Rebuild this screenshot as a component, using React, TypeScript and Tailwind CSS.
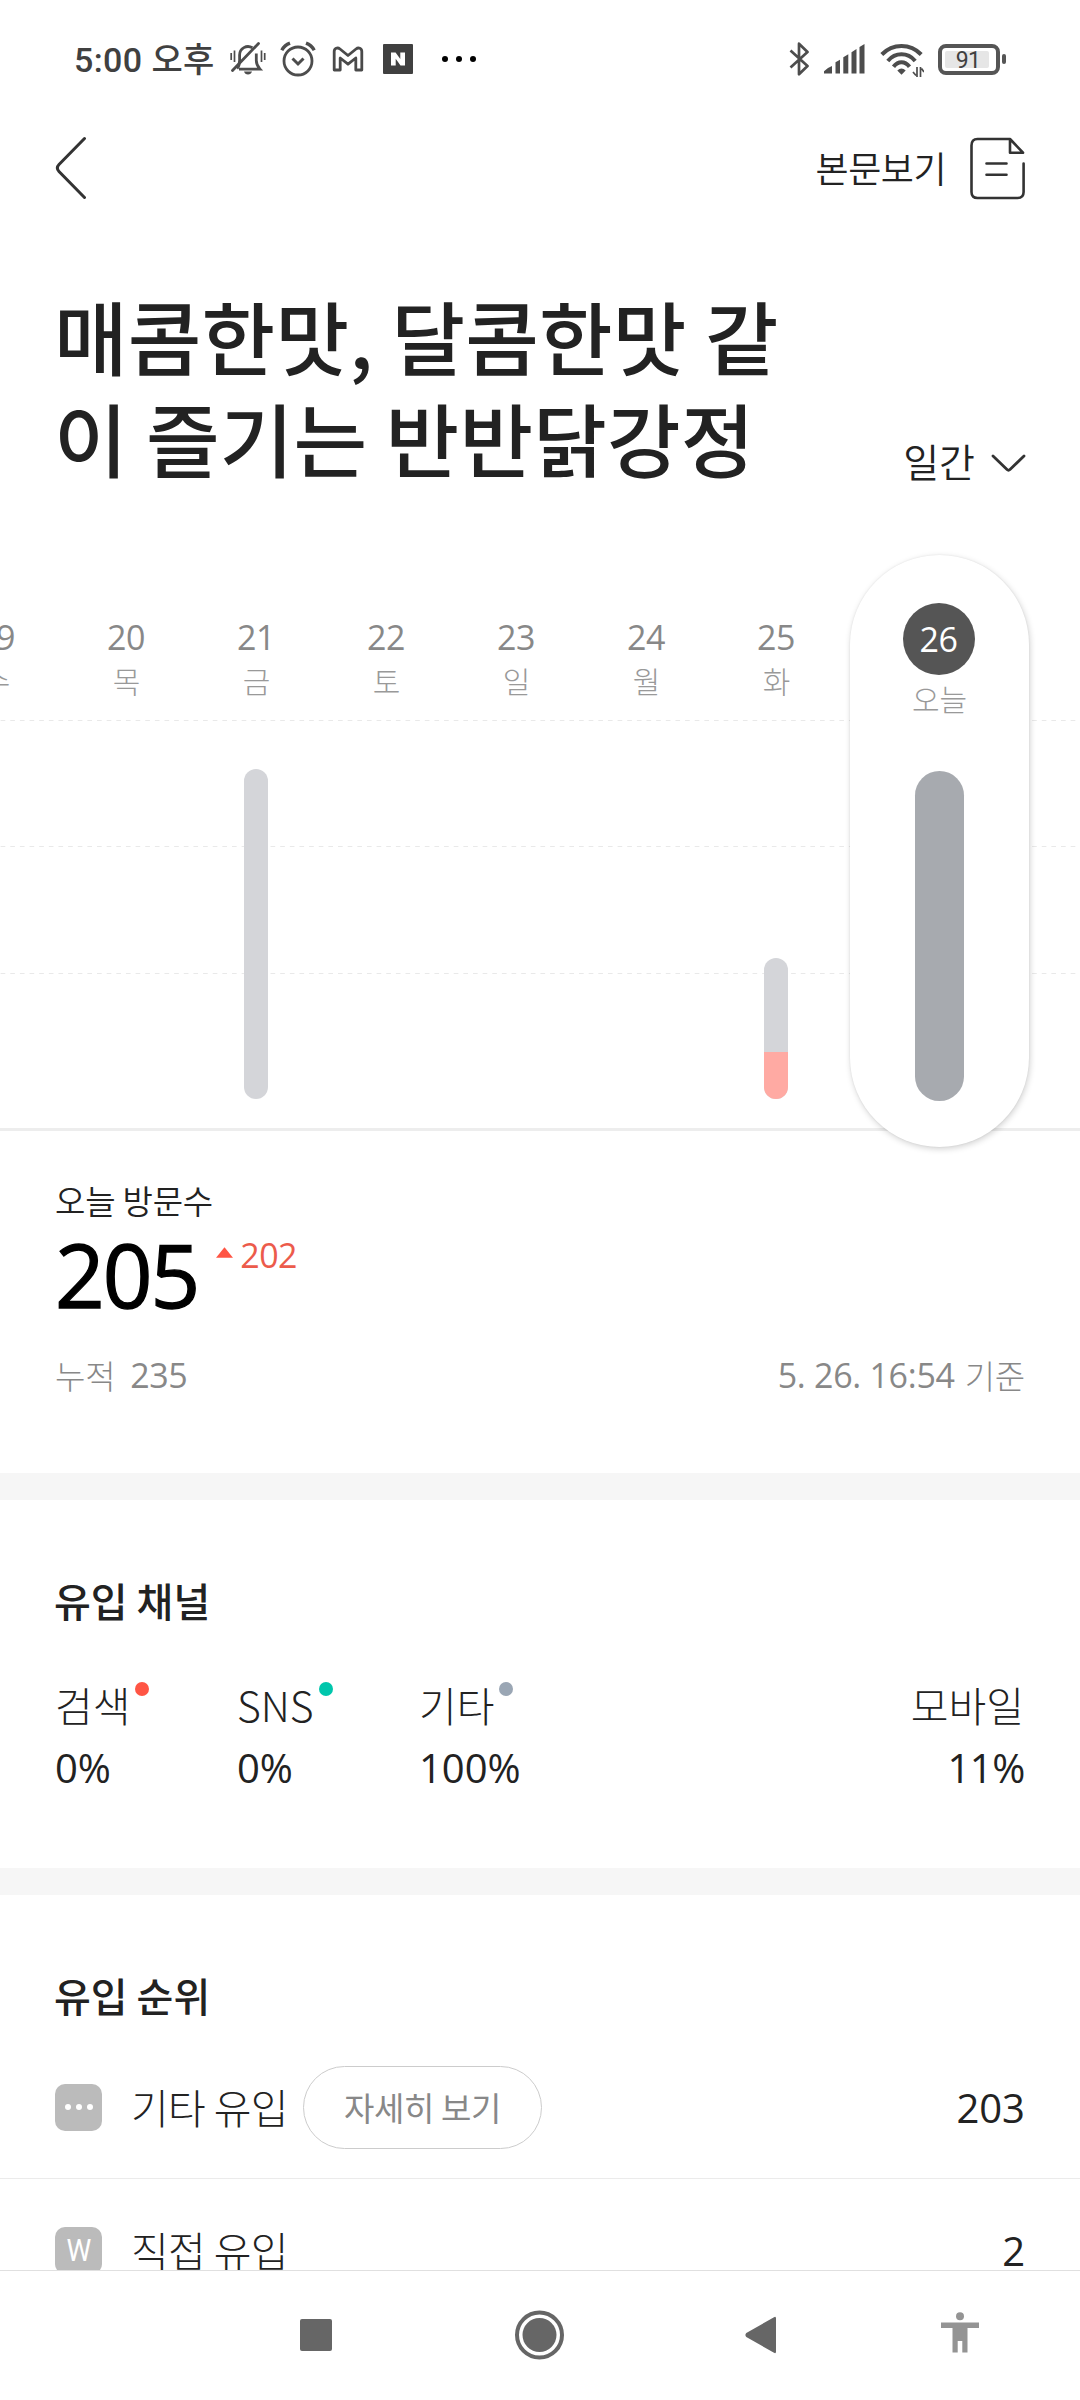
import type { ReactNode } from "react";
import clsx from "clsx";

const DAYS = [
  { date: "19", label: "수", bar: null },
  { date: "20", label: "목", bar: null },
  { date: "21", label: "금", bar: { total: 330, search: 0 } },
  { date: "22", label: "토", bar: null },
  { date: "23", label: "일", bar: null },
  { date: "24", label: "월", bar: null },
  { date: "25", label: "화", bar: { total: 141, search: 47 } },
];

const CHANNELS = [
  { name: "검색", value: "0%", dot: "bg-[#ff5544]" },
  { name: "SNS", value: "0%", dot: "bg-[#00c6ac]" },
  { name: "기타", value: "100%", dot: "bg-[#9aa6b4]" },
];

function Num({ className, children }: { className?: string; children: ReactNode }) {
  return (
    <span className={clsx("font-['Open_Sans',sans-serif] whitespace-nowrap", className)}>
      {children}
    </span>
  );
}

function StatusBar() {
  return (
    <div className="flex h-[118px] items-center pl-[74px] pr-[74px] text-[#4d4d4d]">
      <span className="mt-[2px] w-[156px] whitespace-nowrap font-['Roboto','Noto_Sans_CJK_KR',sans-serif] text-[34px] font-medium leading-[40px] tracking-[0.4px] text-[#404040]">
        5:00 오후
      </span>
      <svg className="h-9 w-9" viewBox="0 0 36 36" fill="none" stroke="currentColor" strokeWidth="2.800">
        <path d="M7 27.5c2-2 2.600-4.500 2.600-8V14a8.400 8.400 0 0 1 12.800-7.200M26.300 12.500v7c0 4 1.700 6.500 3.700 8.700H9" />
        <path d="M2.500 29.500 28.500 2.500" strokeWidth="2.800" strokeLinecap="round" />
        <path d="M14 30.500h8a4.200 4.200 0 0 1-8 0Z" fill="currentColor" stroke="none" />
        <path d="M1.200 12v7M4.500 9.500V21M31.500 9.500V21M34.700 12v7" strokeWidth="1.700" />
      </svg>
      <svg className="ml-[14px] h-9 w-9" viewBox="0 0 36 36" fill="none" stroke="currentColor" strokeWidth="2.800">
        <circle cx="18" cy="20" r="14" />
        <path d="m12.500 17.500 5.500 5.500 5.500-5.500" strokeWidth="3" />
        <path d="M1.800 9.200Q4.500 4.300 10 2.200M34.200 9.200Q31.500 4.300 26 2.200" strokeWidth="3.400" />
      </svg>
      <svg className="ml-[16px] h-[26px] w-8" viewBox="0 0 32 26" fill="none" stroke="#4a4a4a" strokeWidth="2.800" strokeLinejoin="round">
        <path d="M2.200 24V5.500C2.200 2.300 5.500 1 8 3l8 6.500L24 3c2.500-2 5.800-.7 5.800 2.500V24h-6V12L16 18.200 8.200 12v12Z" />
      </svg>
      <span className="ml-[19px] flex h-[30px] w-[30px] items-center justify-center rounded-[1px] bg-[#404040]">
        <svg className="h-[14px] w-[14px]" viewBox="0 0 14 14" fill="#fff">
          <path d="M0 .5h4.600L9.300 7V.5H14v13H9.500L4.700 6.800v6.700H0Z" />
        </svg>
      </span>
      <span className="ml-[29px] flex gap-2">
        <i className="size-[6px] rounded-full bg-black" />
        <i className="size-[6px] rounded-full bg-black" />
        <i className="size-[6px] rounded-full bg-black" />
      </span>
      <svg className="ml-auto h-[34px] w-[22px]" viewBox="0 0 22 34" fill="none" stroke="currentColor" strokeWidth="2.700" strokeLinejoin="round">
        <path d="m1.500 8.500 17 15.500-8.500 8.300V1.700L18.500 10l-17 15.500" />
      </svg>
      <svg className="ml-[13px] h-[30px] w-[41px]" viewBox="0 0 41 30" fill="currentColor">
        <path d="M0 29.500v-2.300q4-4 8-5.200v7.500ZM11.500 29.500V18.300l4.500-2.500v13.700ZM19.300 29.500V13.300l5-3v19.200ZM27.500 29.500V8.300l5-3.300v24.500ZM35.500 29.500V3L40.500 0v29.500Z" />
      </svg>
      <svg className="ml-[15px] mt-[2px] h-[34px] w-[44px]" viewBox="0 0 44 34" fill="none" stroke="currentColor" strokeWidth="4">
        <path d="M1.800 11.500Q10 3 21.500 3t19.700 8.500M7.800 18Q13.500 11.300 21.500 11.300T35.200 18M13.500 23.800Q17 19.300 21.500 19.300t8 4.500" />
        <path d="M17.300 27.500q4.200-4 8.400 0l-4.200 4.300Z" fill="currentColor" stroke="none" />
        <path d="M37 24v10M36 32.500 33 29M40.500 34V24M41.500 25.500l2.500 3.500" strokeWidth="1.700" />
      </svg>
      <span className="ml-[14px] flex h-[31px] w-[62px] items-center rounded-[8px] border-4 border-[#555] pl-[3px]">
        <span className="flex h-[17px] w-[44px] items-center justify-center rounded-[2px] bg-[#e6e6e6] pl-[2px] pt-[2px] font-[Roboto,sans-serif] text-[23px] leading-none tracking-[-0.6px] text-[#404040]">
          91
        </span>
      </span>
      <i className="ml-[2px] h-[10px] w-[4px] rounded-[2px] bg-[#555]" />
    </div>
  );
}

function TopBar() {
  return (
    <header className="flex h-[100px] items-center justify-between pl-[54px] pr-[54px]">
      <button type="button" aria-label="뒤로">
        <svg className="h-16 w-9" viewBox="0 0 36 64" fill="none" stroke="#333" strokeWidth="3" strokeLinecap="round">
          <path d="M30.500 2.500 5 28.500q-3.300 3.500 0 7L30.500 61.500" />
        </svg>
      </button>
      <div className="flex items-center">
        <span className="mt-[-3px] text-[36px] font-[350] leading-[44px] tracking-[-0.500px] text-[#222]">본문보기</span>
        <svg className="ml-[23px] h-16 w-[57px]" viewBox="0 0 57 64" fill="none" stroke="#333" strokeWidth="2.600" strokeLinejoin="round" strokeLinecap="round">
          <path d="M54.600 27.500V56q0 6-6 6H8.500q-6 0-6-6V9.500q0-6.500 6-6.500H41L54 16.700H41V3" />
          <path d="M17.500 27.500h20M17.500 38.700h20" />
        </svg>
      </div>
    </header>
  );
}

function Chart() {
  return (
    <section className="relative h-[644px] border-b-[3px] border-[#ededed]">
      <svg className="absolute left-0 top-0 h-[641px] w-full" fill="none" stroke="#e9e9e9" strokeDasharray="4.640 5">
        <path d="M-9 233.500H1080M-9 359.500H1080M-9 486.500H1080" />
      </svg>
      <div className="relative ml-[-69px] flex h-[641px]">
        {DAYS.map((d) => (
          <div key={d.date} className="flex h-full w-[130px] shrink-0 flex-col items-center pb-[29px] pt-[130px]">
            <Num className="text-[34px] leading-[40px] tracking-[-0.400px] text-[#888]">{d.date}</Num>
            <span className="ml-px mt-[4px] text-[30px] font-light leading-[38px] text-[#999]">{d.label}</span>
            {d.bar && (
              <div
                className="mt-auto flex w-6 flex-col justify-end overflow-hidden rounded-full bg-[#d4d5d9]"
                style={{ height: d.bar.total }}
              >
                <div className="bg-[#ffaaa3]" style={{ height: d.bar.search }} />
              </div>
            )}
          </div>
        ))}
        <div className="ml-[9px] mt-[68px] flex h-[592px] w-[179px] shrink-0 flex-col items-center rounded-full bg-white pt-[48px] shadow-[1px_2px_6px_rgba(0,0,0,0.18),0_0_2px_rgba(0,0,0,0.08)]">
          <span className="mr-[2px] flex size-[72px] items-center justify-center rounded-full bg-[#555]">
            <Num className="text-[34px] leading-[40px] tracking-[-0.400px] text-white">26</Num>
          </span>
          <span className="mt-[1px] text-[30px] font-light leading-[44px] text-[#999]">오늘</span>
          <div className="mt-[51px] h-[330px] w-[49px] rounded-full bg-[#a7aaaf]" />
        </div>
      </div>
    </section>
  );
}

function Summary() {
  return (
    <section className="h-[342px] px-[55px] pt-[47px]">
      <h2 className="text-[33px] font-[350] leading-[44px] tracking-[-0.200px] text-[#222]">오늘 방문수</h2>
      <div className="flex h-[96px] items-start">
        <Num className="mt-[4px] text-[87px] leading-[96px] tracking-[-2px] text-black [-webkit-text-stroke:1.3px_black]">
          205
        </Num>
        <svg className="ml-[18px] mt-[25px] h-[11px] w-[17px]" viewBox="0 0 18 11" fill="#ff5544">
          <path d="M9 0 18 11H0Z" />
        </svg>
        <Num className="ml-[7px] mt-[13px] text-[34px] leading-[40px] tracking-[-0.500px] text-[#ec5b4b]">202</Num>
      </div>
      <div className="mt-[34px] flex items-center text-[33px] font-light leading-[44px] tracking-[-0.200px] text-[#888]">
        <span>누적</span>
        <Num className="ml-[15px] mt-px text-[34px] font-normal tracking-[-0.500px]">235</Num>
        <Num className="ml-auto mt-px text-[34px] font-normal tracking-[-0.300px]">5. 26. 16:54</Num>
        <span className="ml-[10px]">기준</span>
      </div>
    </section>
  );
}

function Channels() {
  return (
    <section className="h-[395px] border-t-[27px] border-[#f6f6f6] pl-[55px] pr-[56px] pt-[76px]">
      <h2 className="ml-[-1px] text-[40px] font-medium leading-[48px] text-[#222]">유입 채널</h2>
      <div className="mt-[55px] flex text-[#222]">
        {CHANNELS.map((c) => (
          <div key={c.name} className="flex w-[182px] flex-col">
            <div className="flex items-start text-[41px] font-light leading-[50px]">
              {c.name}
              <i className={clsx("ml-[5px] mt-[3px] size-[14px] rounded-full", c.dot)} />
            </div>
            <Num className="mt-[15px] text-[40px] leading-[48px]">{c.value}</Num>
          </div>
        ))}
        <div className="ml-auto flex flex-col items-end">
          <span className="text-[41px] font-light leading-[50px]">모바일</span>
          <Num className="mr-[-1px] mt-[15px] text-[40px] leading-[48px] tracking-[-0.400px]">11%</Num>
        </div>
      </div>
    </section>
  );
}

function RankRow({ icon, name, count, more }: { icon: ReactNode; name: string; count: string; more?: boolean }) {
  return (
    <li className="flex h-[143px] shrink-0 items-center border-b border-[#ebebeb] px-[55px] text-[#222]">
      <span className="flex size-[47px] items-center justify-center rounded-[10px] bg-[#bbb] text-white">{icon}</span>
      <span className="mt-[-2px] ml-[29px] text-[41px] font-light leading-[50px] tracking-[-0.600px]">{name}</span>
      {more && (
        <button type="button" className="ml-[15px] h-[83px] w-[239px] rounded-full border border-[#ccc] text-[33px] leading-[44px] tracking-[-0.400px] text-[#888]">
          자세히 보기
        </button>
      )}
      <Num className="ml-auto mt-px text-[40px] leading-[48px]">{count}</Num>
    </li>
  );
}

function Ranking() {
  return (
    <section className="h-[402px] overflow-hidden border-t-[27px] border-[#f6f6f6] pt-[76px]">
      <h2 className="px-[54px] text-[40px] font-medium leading-[48px] text-[#222]">유입 순위</h2>
      <ul className="mt-[17px]">
        <RankRow
          name="기타 유입"
          count="203"
          more
          icon={
            <span className="flex gap-[5px]">
              <i className="size-[6px] rounded-full bg-white" />
              <i className="size-[6px] rounded-full bg-white" />
              <i className="size-[6px] rounded-full bg-white" />
            </span>
          }
        />
        <RankRow
          name="직접 유입"
          count="2"
          icon={<span className="scale-x-90 font-[Roboto,sans-serif] text-[31px] leading-none">W</span>}
        />
      </ul>
    </section>
  );
}

function NavBar() {
  return (
    <nav className="flex h-[130px] items-center border-t border-[#e0e0e0] bg-white pb-px pl-[300px] text-[#666]">
      <span className="size-8 rounded-[2px] bg-[#666]" />
      <svg className="ml-[182px] size-[50px]" viewBox="0 0 50 50" fill="currentColor">
        <circle cx="25.500" cy="25" r="22.500" fill="none" stroke="currentColor" strokeWidth="4" />
        <circle cx="25.500" cy="25" r="17" />
      </svg>
      <svg className="ml-[181px] h-[38px] w-8" viewBox="0 0 32 38" fill="currentColor">
        <path d="M29 1.300q2-1.300 2 1.200v33q0 2.500-2 1.200L1.300 21q-1.800-2 0-4Z" />
      </svg>
      <svg className="ml-[164px] mt-[-6px] h-[41px] w-[38px] text-[#949494]" viewBox="0 0 38 41" fill="currentColor">
        <circle cx="19" cy="4.200" r="4" />
        <path d="M0 10.500h38v5.500H26.500v24.500h-5.200V29h-4.600v11.500h-5.200V16H0Z" />
      </svg>
    </nav>
  );
}

export default function App() {
  return (
    <div className="h-[2400px] w-[1080px] overflow-hidden bg-white font-['Noto_Sans_CJK_KR',sans-serif]">
      <StatusBar />
      <TopBar />
      <div className="flex h-[269px] items-end justify-between pl-[54px] pr-[54px] pt-[65px]">
        <h1 className="text-[80px] font-medium leading-[102px] tracking-[0.200px] text-[#222]">
          매콤한맛, 달콤한맛 같
          <br />이 즐기는 반반닭강정
        </h1>
        <button type="button" className="flex items-center text-[39px] font-[350] leading-[54px] text-[#222]">
          일간
          <svg className="ml-[16px] mt-[7px] h-[19px] w-[35px]" viewBox="0 0 35 19" fill="none" stroke="#333" strokeWidth="2.800" strokeLinecap="round">
            <path d="m2 2 14 13.500q1.500 1.400 3 0L33 2" />
          </svg>
        </button>
      </div>
      <Chart />
      <Summary />
      <Channels />
      <Ranking />
      <NavBar />
    </div>
  );
}
